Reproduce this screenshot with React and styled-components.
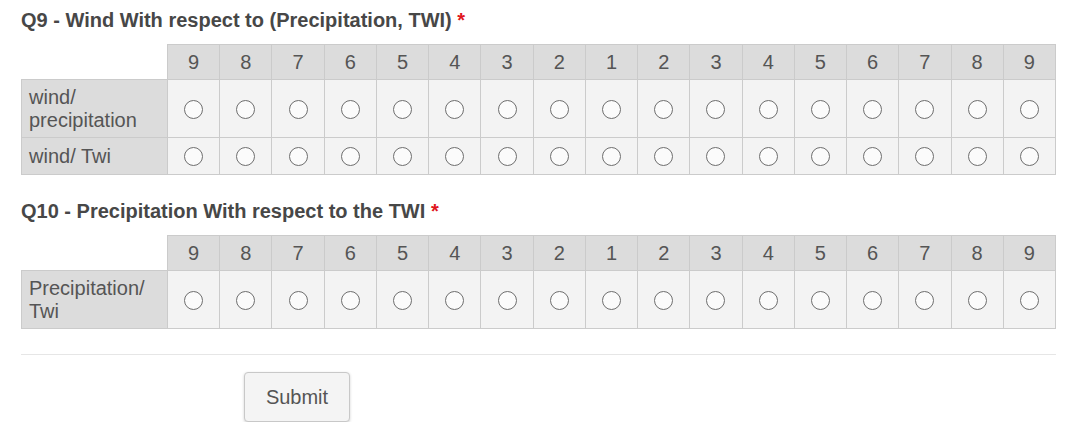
import styled, { createGlobalStyle } from 'styled-components';

const scale = [9, 8, 7, 6, 5, 4, 3, 2, 1, 2, 3, 4, 5, 6, 7, 8, 9];

const questions = [
  {
    title: 'Q9 - Wind With respect to (Precipitation, TWI)',
    rows: ['wind/ precipitation', 'wind/ Twi'],
  },
  {
    title: 'Q10 - Precipitation With respect to the TWI',
    rows: ['Precipitation/ Twi'],
  },
];

export default function App() {
  return (
    <>
      <GlobalStyle />
      <Form>
        {questions.map((q, qi) => (
          <Question key={qi} $first={qi === 0}>
            <Title>
              {q.title} <Required>*</Required>
            </Title>
            <Matrix>
              <colgroup>
                <col style={{ width: 146 }} />
                {scale.map((_, i) => <col key={i} />)}
              </colgroup>
              <thead>
                <tr>
                  <Corner />
                  {scale.map((n, i) => (
                    <HeadCell key={i}>{n}</HeadCell>
                  ))}
                </tr>
              </thead>
              <tbody>
                {q.rows.map((label, ri) => (
                  <tr key={ri}>
                    <RowLabel>{label}</RowLabel>
                    {scale.map((_, i) => (
                      <Cell key={i}>
                        <Radio />
                      </Cell>
                    ))}
                  </tr>
                ))}
              </tbody>
            </Matrix>
          </Question>
        ))}
        <Divider />
        <Actions>
          <SubmitButton>Submit</SubmitButton>
        </Actions>
      </Form>
    </>
  );
}

const GlobalStyle = createGlobalStyle`
  body {
    margin: 0;
    background: #ffffff;
    font-family: "Liberation Sans", Arial, sans-serif;
    color: #555555;
  }
`;

const Form = styled.div`
  width: 1035px;
  padding: 8px 0 0 21px;
`;

const Question = styled.section`
  margin-top: ${props => props.$first ? "0" : "24px"};
`;

const Title = styled.h2`
  margin: 0 0 12px 0;
  font-size: 20px;
  line-height: 24px;
  font-weight: 700;
  color: #474747;
`;

const Required = styled.span`
  color: #e0161d;
`;

const Matrix = styled.table`
  width: 100%;
  table-layout: fixed;
  border-collapse: collapse;
  font-size: 20px;
  line-height: 23px;
  color: #555555;
`;

const Corner = styled.th`
  border: none;
  background: transparent;
`;

const HeadCell = styled.th`
  font-weight: 400;
  text-align: center;
  padding: 6px 0 5px;
  background: #dcdcdc;
  border: 1px solid #cbcbcb;
`;

const RowLabel = styled.th`
  font-weight: 400;
  text-align: left;
  padding: 6px 7px 5px;
  background: #dcdcdc;
  border: 1px solid #cbcbcb;
`;

const Cell = styled.td`
  height: 36px;
  text-align: center;
  vertical-align: middle;
  padding: 0;
  background: #f3f3f3;
  border: 1px solid #cbcbcb;
`;

const Radio = styled.span`
  display: block;
  margin: 1px auto 0;
  width: 19px;
  height: 19px;
  box-sizing: border-box;
  border: 1.5px solid #6e6e6e;
  border-radius: 50%;
  background: #fbfbfb;
`;

const Divider = styled.hr`
  margin: 25px 0 0 0;
  border: none;
  border-top: 1px solid #e6e6e6;
`;

const Actions = styled.div`
  padding: 17px 0 0 223px;
`;

const SubmitButton = styled.button`
  width: 106px;
  height: 50px;
  font-family: "Liberation Sans", Arial, sans-serif;
  font-size: 20px;
  color: #555555;
  background: #f4f4f4;
  border: 1px solid #c8c8c8;
  border-radius: 4px;
  box-shadow: 0 1px 3px rgba(0, 0, 0, 0.18);
  cursor: pointer;
`;
